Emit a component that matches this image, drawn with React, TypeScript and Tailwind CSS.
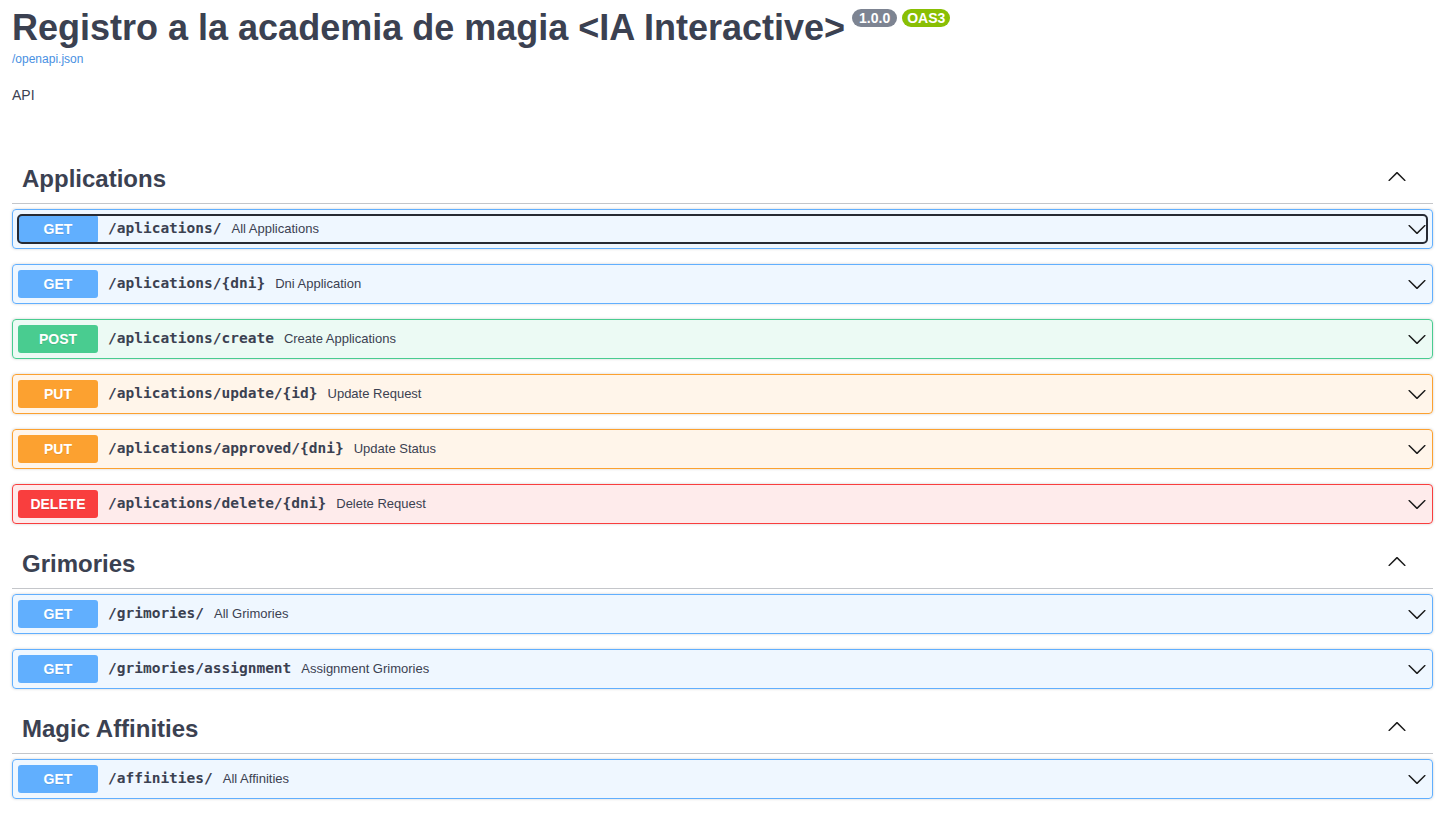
const methodStyles: Record<string, { row: string; badge: string }> = {
  GET: {
    row: "border-[#61affe] bg-[rgba(97,175,254,0.1)]",
    badge: "bg-[#61affe]",
  },
  POST: {
    row: "border-[#49cc90] bg-[rgba(73,204,144,0.1)]",
    badge: "bg-[#49cc90]",
  },
  PUT: {
    row: "border-[#fca130] bg-[rgba(252,161,48,0.1)]",
    badge: "bg-[#fca130]",
  },
  DELETE: {
    row: "border-[#f93e3e] bg-[rgba(249,62,62,0.1)]",
    badge: "bg-[#f93e3e]",
  },
};

interface Operation {
  method: string;
  path: string;
  summary: string;
  focused?: boolean;
}

const sections: { name: string; ops: Operation[] }[] = [
  {
    name: "Applications",
    ops: [
      { method: "GET", path: "/aplications/", summary: "All Applications", focused: true },
      { method: "GET", path: "/aplications/{dni}", summary: "Dni Application" },
      { method: "POST", path: "/aplications/create", summary: "Create Applications" },
      { method: "PUT", path: "/aplications/update/{id}", summary: "Update Request" },
      { method: "PUT", path: "/aplications/approved/{dni}", summary: "Update Status" },
      { method: "DELETE", path: "/aplications/delete/{dni}", summary: "Delete Request" },
    ],
  },
  {
    name: "Grimories",
    ops: [
      { method: "GET", path: "/grimories/", summary: "All Grimories" },
      { method: "GET", path: "/grimories/assignment", summary: "Assignment Grimories" },
    ],
  },
  {
    name: "Magic Affinities",
    ops: [{ method: "GET", path: "/affinities/", summary: "All Affinities" }],
  },
];

const ARROW =
  "M17.418 6.109c.272-.268.709-.268.979 0s.271.701 0 .969l-7.908 7.83c-.27.268-.707.268-.979 0l-7.908-7.83c-.27-.268-.27-.701 0-.969.271-.268.709-.268.979 0L10 13.25l7.418-7.141z";

const Arrow = ({ up, className }: { up?: boolean; className?: string }) => (
  <svg viewBox="0 0 20 20" width="20" height="20" className={className}>
    <path d={ARROW} fill="#1b1b1b" transform={up ? "rotate(180 10 10)" : undefined} />
  </svg>
);

const OpRow = ({ op }: { op: Operation }) => {
  const s = methodStyles[op.method];
  return (
    <div
      className={`mb-[15px] flex h-[40px] items-center rounded-[4px] border p-[5px] shadow-[0_0_3px_rgba(0,0,0,0.19)] ${s.row}`}
    >
      <div
        className={`flex h-full flex-1 items-center rounded-[4px] ${
          op.focused ? "outline-2 -outline-offset-1 outline-[#262a33]" : ""
        }`}
      >
        <span
          className={`flex h-[28px] w-[80px] shrink-0 items-center justify-center rounded-[3px] text-[14px] font-bold text-white [text-shadow:0_1px_0_rgba(0,0,0,0.1)] ${s.badge}`}
        >
          {op.method}
        </span>
        <span className="px-[10px] font-['DejaVu_Sans_Mono',monospace] text-[14.5px] font-bold text-[#3b4151]">
          {op.path}
        </span>
        <span className="flex-1 text-[13px] text-[#3b4151]">{op.summary}</span>
        <Arrow />
      </div>
    </div>
  );
};

export default function App() {
  return (
    <div className="min-h-screen bg-white px-3 font-['Liberation_Sans',Arial,sans-serif] text-[#3b4151]">
      <div className="pt-[7px]">
        <h2 className="flex items-start text-[36px] font-bold leading-[41px]">
          <span>Registro a la academia de magia &lt;IA Interactive&gt;</span>
          <span className="ml-[7px] mt-[2px] flex gap-[5px] text-[14px] leading-[18px] text-white">
            <span className="h-[18px] rounded-full bg-[#7d8492] px-[7px]">1.0.0</span>
            <span className="h-[18px] rounded-full bg-[#89bf04] px-[5px]">OAS3</span>
          </span>
        </h2>
        <a className="mt-[4px] block text-[12px] leading-[14px] text-[#4990e2]">/openapi.json</a>
        <p className="mt-[21px] text-[14px] leading-[16px]">API</p>
      </div>

      <div className="mt-[51px]">
        {sections.map((sec) => (
          <div key={sec.name}>
            <div className="mb-[5px] flex h-[50px] items-center justify-between border-b border-[rgba(59,65,81,0.3)] pl-[10px] pr-[26px]">
              <h3 className="text-[24px] font-bold">{sec.name}</h3>
              <Arrow up className="-mt-[3px]" />
            </div>
            {sec.ops.map((op) => (
              <OpRow key={op.method + op.path} op={op} />
            ))}
          </div>
        ))}
      </div>
    </div>
  );
}
